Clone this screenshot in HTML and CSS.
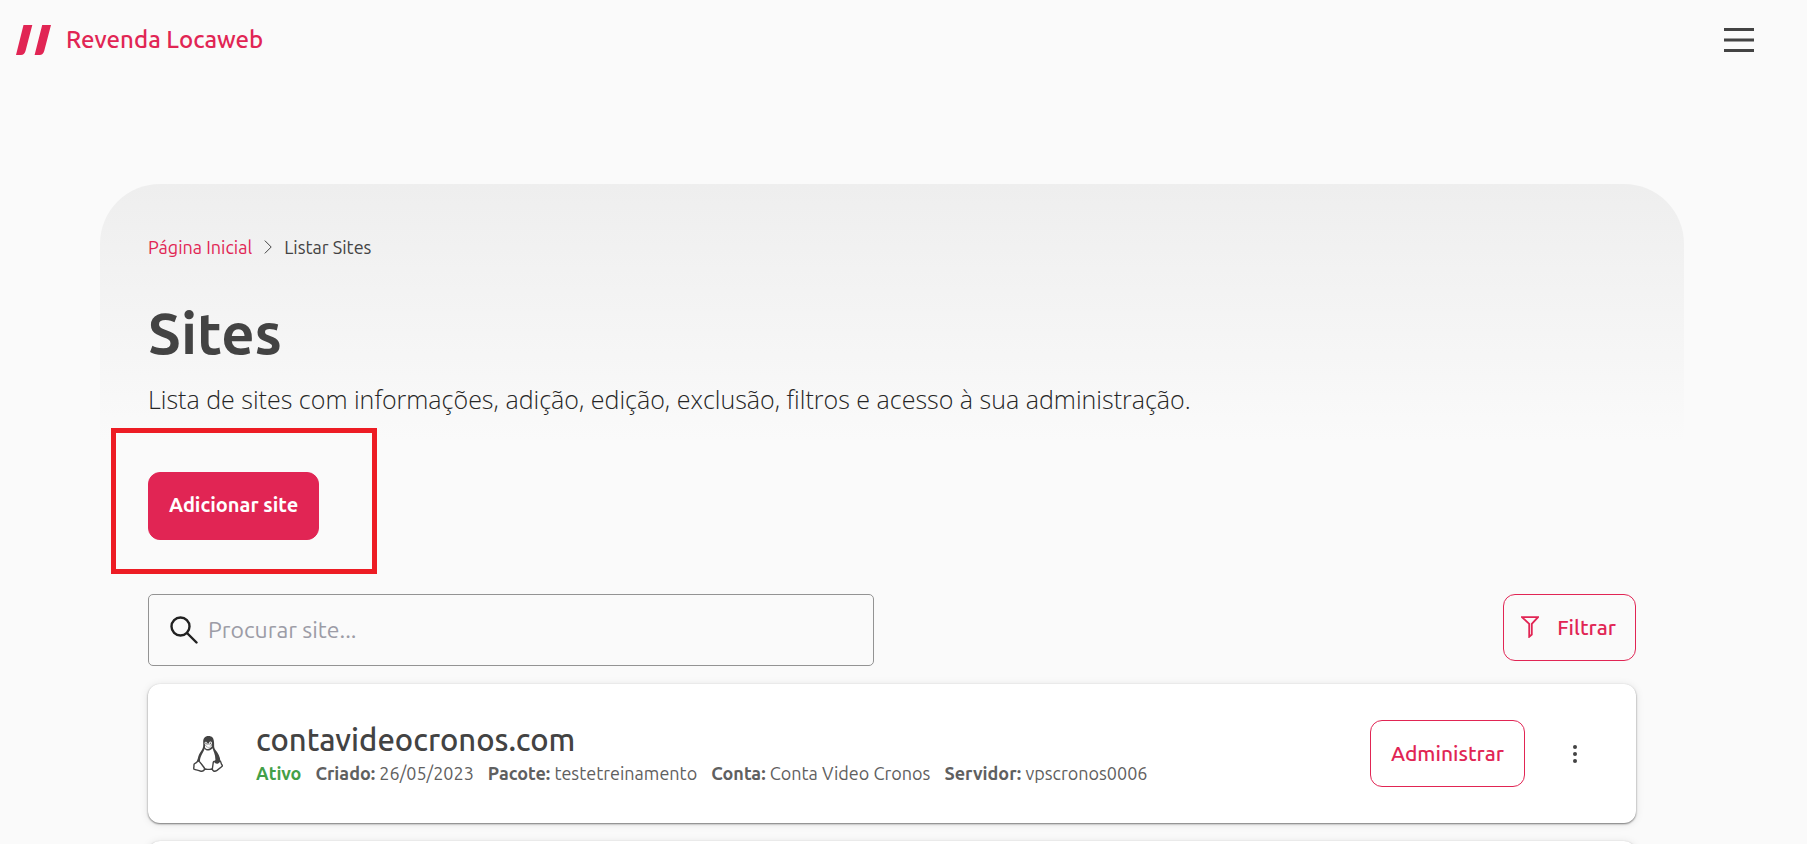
FILE: index.html
```html
<!DOCTYPE html>
<html lang="pt-BR">
<head>
<meta charset="utf-8">
<title>Revenda Locaweb - Sites</title>
<meta name="viewport" content="width=device-width, initial-scale=1">
<link rel="stylesheet" href="styles.css">
</head>
<body>
<header class="topbar">
  <a class="brand" href="#">
    <svg class="brand-logo" viewBox="0 0 36 32" aria-hidden="true"><path d="M7.500 1H16.300L9.500 27Q8.300 31 5 31H0ZM26.200 1H35L28.200 27Q27 31 23.700 31H18.600Z"/></svg>
    <span>Revenda Locaweb</span>
  </a>
  <button class="menu-button" type="button" aria-label="Menu">
    <svg viewBox="0 0 30 24" aria-hidden="true"><path d="M0 1.500H30M0 12H30M0 22.500H30"/></svg>
  </button>
</header>

<main class="page">
  <section class="hero">
    <nav class="breadcrumb" aria-label="Breadcrumb">
      <a href="#">Página Inicial</a>
      <svg viewBox="0 0 8 14" aria-hidden="true"><path d="M.8.6 7.200 7 .8 13.400"/></svg>
      <span>Listar Sites</span>
    </nav>
    <h1 class="title">Sites</h1>
    <p class="subtitle">Lista de sites com informações, adição, edição, exclusão, filtros e acesso à sua administração.</p>
  </section>

  <div class="content">
    <div class="highlight">
      <button class="button button-primary" type="button">Adicionar site</button>
    </div>

    <div class="toolbar">
      <label class="search">
        <svg viewBox="0 0 28 28" aria-hidden="true"><circle cx="10.500" cy="10.500" r="9"/><path d="M17 17 26.500 26.500"/></svg>
        <input type="search" placeholder="Procurar site..." aria-label="Procurar site">
      </label>
      <button class="button button-outline button-filter" type="button">
        <svg viewBox="0 0 18 22" aria-hidden="true"><path d="M1 1.200H17L10.800 7.800V18.500L8.200 20.800V7.800ZM1 1.200 8.200 7.800"/></svg>
        Filtrar
      </button>
    </div>

    <ul class="sites">
      <li class="card">
        <svg class="tux" viewBox="0 0 30 36" aria-hidden="true">
          <path class="tux-body" d="M15.500 0C11.500 0 10 2.700 10.200 6.500C10.300 10.500 10.400 11.500 8.500 14.500C6.500 17.500 5.500 19 4.800 22.500L3.700 25.500L12 34H20L27.300 26C27.800 21.500 25 17.200 22.500 14C20.500 11.400 21.400 9.500 21 6C20.700 2 19.200 0 15.500 0Z"/>
          <path class="tux-light" d="M11.700 12.500C12.500 15 16.500 15.700 19.600 12.300C20.300 15 22.500 18.500 22.400 24L20.500 26L19.500 32C17.500 33 13.500 33 11.700 32L7 25.500C6.700 20.500 10 17.500 11.700 12.500Z"/>
          <path class="tux-light" d="M12 8.600C11 7.200 11.800 5.400 13 5.700C14.200 5.900 14.200 7 14.400 7.800C15 7.500 15.400 7.500 15.900 7.800C16 5.800 17 5.200 18.300 5.800C19.400 6.500 18.900 8 18.300 8.900L19.200 9.700C18 12.500 14 14.700 12 11.500Z"/>
          <path class="tux-beak" d="M12 9.200 15.500 8.300 19 9.700C17.500 11.500 14.500 12.500 12 9.200Z"/>
          <path class="tux-dot" d="M12.500 6.500h1v1.400h-1ZM16.800 6.500h1v1.400h-1Z"/>
          <path class="tux-foot" d="M4.600 25.200C6 24.600 7 26 7.900 27.400L11.200 31.700C12.200 34.200 9.800 35.800 7.300 35C5 34.200 2.500 34 1 33.200C.2 32.500 1.300 30.800.9 29C.8 26.700 3.500 27.500 4.600 25.200Z"/>
          <path class="tux-foot" d="M20.300 26.200C20.800 24.800 22 25.500 22.700 26.700C24 27.500 26 26.800 26.700 25C28.200 24.900 27.800 27.200 28.600 28.400C29.200 29.400 30.200 29.700 28.600 30.700L24 34.400C21.500 36 19 35 19.400 32.500Z"/>
        </svg>
        <div class="card-info">
          <h2 class="card-title">contavideocronos.com</h2>
          <p class="card-meta">
            <strong class="status">Ativo</strong>
            <span><strong>Criado:</strong> 26/05/2023</span>
            <span><strong>Pacote:</strong> testetreinamento</span>
            <span><strong>Conta:</strong> Conta Video Cronos</span>
            <span><strong>Servidor:</strong> vpscronos0006</span>
          </p>
        </div>
        <button class="button button-outline" type="button">Administrar</button>
        <button class="more-button" type="button" aria-label="Mais opções">
          <svg viewBox="0 0 4 18" aria-hidden="true"><circle cx="2" cy="2" r="2"/><circle cx="2" cy="9" r="2"/><circle cx="2" cy="16" r="2"/></svg>
        </button>
      </li>
      <li class="card"></li>
    </ul>
  </div>
</main>
</body>
</html>
```
FILE: styles.css
```css
:root {
  --brand: #e12554;
  --text: #434343;
  --muted: #5f6060;
  --page: #fafafa;
}

* {
  box-sizing: border-box;
}

html {
  overflow: hidden;
}

body {
  margin: 0;
  height: 100vh;
  overflow: hidden;
  background: var(--page);
  color: var(--text);
  font-family: Ubuntu, "Noto Sans", "Open Sans", sans-serif;
  font-size: 18px;
  line-height: 24px;
}

button,
input {
  font: inherit;
}

h1,
h2,
p,
ul {
  margin: 0;
  padding: 0;
}

.topbar {
  display: flex;
  align-items: center;
  justify-content: space-between;
  height: 80px;
  padding: 0 53px 0 16px;
}

.brand {
  display: flex;
  align-items: center;
  gap: 14px;
  color: var(--brand);
  font-size: 24px;
  font-weight: 500;
  line-height: 32px;
  text-decoration: none;
}

.brand-logo {
  width: 36px;
  height: 32px;
  fill: var(--brand);
}

.menu-button {
  display: flex;
  padding: 0;
  border: 0;
  background: none;
}

.menu-button svg {
  width: 30px;
  height: 24px;
  stroke: var(--text);
  stroke-width: 3;
}

.page {
  padding: 104px 123px 0 100px;
}

.hero {
  height: 256px;
  padding: 51px 48px 0;
  border-radius: 60px 60px 0 0;
  background: linear-gradient(#eee, var(--page));
}

.breadcrumb {
  display: flex;
  align-items: center;
  gap: 12px;
}

.breadcrumb a {
  color: var(--brand);
  text-decoration: none;
}

.breadcrumb svg {
  width: 8px;
  height: 14px;
  fill: none;
  stroke: var(--text);
  stroke-width: 1;
}

.title {
  margin-top: 34px;
  font-size: 58px;
  font-weight: 700;
  line-height: 80px;
}

.subtitle {
  margin-top: 8px;
  color: #262626;
  font-family: "Open Sans", sans-serif;
  font-size: 25px;
  font-weight: 300;
  line-height: 36px;
}

.content {
  padding: 0 48px;
}

.highlight {
  width: 266px;
  margin: -12px 0 20px -37px;
  padding: 39px 32px 29px;
  border: 5px solid #ed1c24;
}

.button {
  height: 67px;
  padding: 0 20px 2px;
  border: 1px solid var(--brand);
  border-radius: 12px;
  font-size: 21px;
  font-weight: 500;
  white-space: nowrap;
}

.button-primary {
  display: block;
  height: 68px;
  background: var(--brand);
  color: #fff;
  font-size: 20px;
  font-weight: 700;
}

.button-outline {
  background: transparent;
  color: var(--brand);
}

.button-filter {
  display: flex;
  align-items: center;
  gap: 18px;
  justify-self: end;
  padding: 0 19px 2px 17px;
}

.button-filter svg {
  width: 18px;
  height: 22px;
  fill: none;
  stroke: var(--brand);
  stroke-width: 1.8;
}

.toolbar {
  display: grid;
  grid-template-columns: 1fr 1fr;
  align-items: start;
  gap: 36px;
}

.search {
  display: flex;
  align-items: center;
  gap: 10px;
  height: 72px;
  padding: 0 21px;
  border: 1px solid #939393;
  border-radius: 5px;
}

.search svg {
  width: 28px;
  height: 28px;
  fill: none;
  stroke: #212121;
  stroke-width: 2.4;
  stroke-linecap: round;
}

.search input {
  flex: 1;
  min-width: 0;
  padding: 0;
  border: 0;
  outline: 0;
  background: transparent;
  color: var(--text);
  font-size: 23px;
}

.search input::placeholder {
  color: #9c9ca6;
  opacity: 1;
}

.sites {
  display: grid;
  gap: 18px;
  margin-top: 18px;
  list-style: none;
}

.card {
  display: flex;
  align-items: center;
  height: 139px;
  padding: 0 44px 0 45px;
  border-radius: 12px;
  background: #fff;
  box-shadow: 0 1px 2px rgba(0, 0, 0, .5), 0 1px 8px rgba(0, 0, 0, .1);
}

.tux {
  flex: none;
  width: 30px;
  height: 36px;
}

.tux-body,
.tux-dot {
  fill: var(--text);
}

.tux-light {
  fill: #fff;
}

.tux-beak,
.tux-foot {
  fill: #fff;
  stroke: var(--text);
}

.tux-beak {
  stroke-width: .4;
}

.tux-foot {
  stroke-width: 1.4;
}

.card-info {
  flex: 1;
  margin-left: 33px;
}

.card-title {
  padding-bottom: 4px;
  font-size: 31px;
  font-weight: 500;
  line-height: 34px;
}

.card-meta {
  display: flex;
  gap: 14px;
  color: var(--muted);
}

.status {
  color: #43a047;
}

.more-button {
  display: flex;
  margin-left: 33px;
  padding: 10px 15px;
  border: 0;
  background: none;
}

.more-button svg {
  width: 4px;
  height: 18px;
  fill: var(--text);
}
```
